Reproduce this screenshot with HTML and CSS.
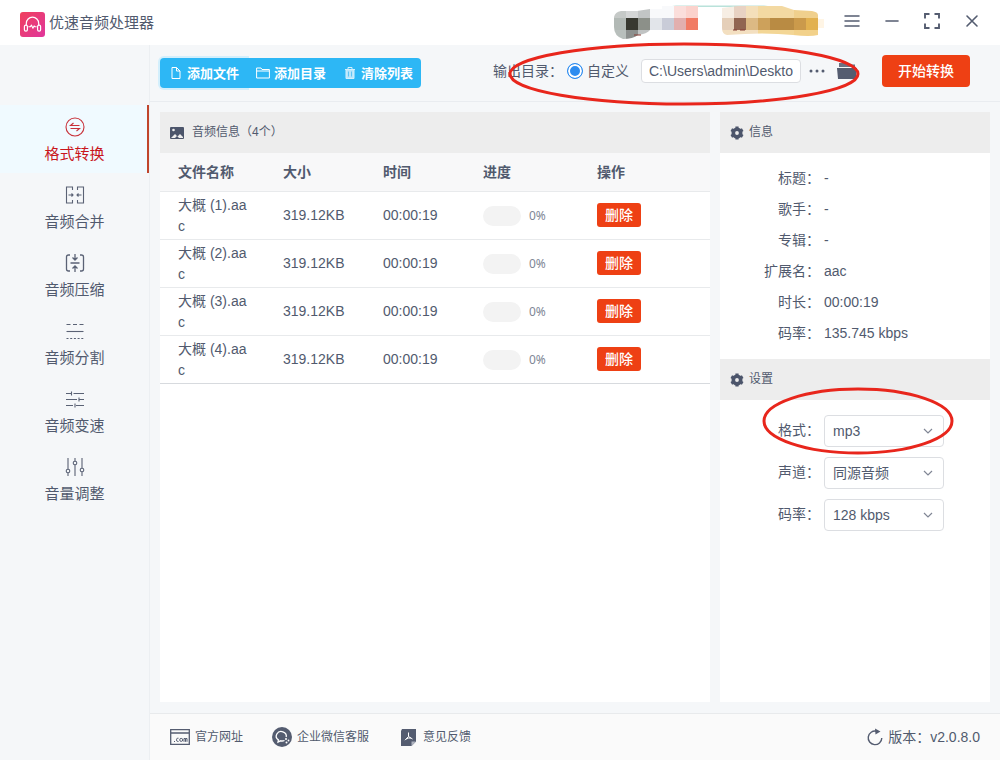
FILE: index.html
```
<!doctype html>
<html lang="zh-CN">
<head>
    <meta charset="utf-8">
    <title>优速音频处理器</title>
    <link rel="stylesheet" href="styles.css">
</head>
<body>
    <header class="titlebar">
        <svg class="logo" width="25" height="25" viewBox="0 0 25 25">
            <defs>
                <linearGradient id="logo-bg" x1="0" y1="0" x2="1" y2="1">
                    <stop offset="0" stop-color="#f0405c"/>
                    <stop offset="1" stop-color="#e0369c"/>
                </linearGradient>
            </defs>
            <rect width="25" height="25" rx="3" fill="url(#logo-bg)"/>
            <g fill="none" stroke="#fff" stroke-width="1.2" stroke-linecap="round" stroke-linejoin="round">
                <path d="M6.300 13v-1.600a6.200 6.200 0 0 1 12.400 0V13"/>
                <rect x="4.400" y="13.200" width="3" height="6" rx="1.400"/>
                <rect x="17.600" y="13.200" width="3" height="6" rx="1.400"/>
                <path d="M8.800 14.700h1.600l1-1.600 1.500 3.200 1.200-2.400.7.800h1.400" stroke-width="1.100"/>
            </g>
        </svg>
        <h1 class="title">优速音频处理器</h1>
        <svg class="account" width="212" height="37" viewBox="612 4 212 37">
            <path d="M676 5.500h88l12 1.500H664z" fill="#b9e2da"/>
            <clipPath id="acc-a"><path d="M614 17q1-5 7-6h16l13-2h12V6h36v24q-30 1-48 0-3 4-12 5-5 4-15 4-9-3-9-12z"/></clipPath>
            <g clip-path="url(#acc-a)">
                <path fill="#c5c9c7" d="M614 6h12v12h-12z"/>
                <path fill="#d4d6d6" d="M626 6h12v12h-12z"/>
                <path fill="#c2c5c5" d="M638 6h12v12h-12z"/>
                <path fill="#f8f9fb" d="M650 6h24v12h-24z"/>
                <path fill="#fbdedb" d="M674 6h12v12h-12z"/>
                <path fill="#fbd2cc" d="M686 6h12v12h-12z"/>
                <path fill="#b2b9b5" d="M614 18h12v12h-12z"/>
                <path fill="#37382f" d="M626 18h12v12h-12z"/>
                <path fill="#8c9089" d="M638 18h12v12h-12z"/>
                <path fill="#e2e5ea" d="M650 18h12v12h-12z"/>
                <path fill="#c9ccd8" d="M662 18h12v12h-12z"/>
                <path fill="#e2afae" d="M674 18h12v12h-12z"/>
                <path fill="#f17b64" d="M686 18h12v12h-12z"/>
                <path fill="#b8bfbc" d="M614 30h12v10h-12z"/>
                <path fill="#8c908e" d="M626 30h12v10h-12z"/>
                <path fill="#c0c3c3" d="M638 30h12v10h-12z"/>
            </g>
            <clipPath id="acc-b"><path d="M722 8l16-2h44l12 4 18 1q6 1 6 4v20q-8 2-25 0-30-3-66 0-5-1-5-7z"/></clipPath>
            <g clip-path="url(#acc-b)">
                <path fill="#f7eee4" d="M722 6h12v12h-12z"/>
                <path fill="#e8d2c3" d="M734 6h12v12h-12z"/>
                <path fill="#f4dfba" d="M746 6h12v12h-12z"/>
                <path fill="#f3d9a2" d="M758 6h36v12h-36z"/>
                <path fill="#f0d08d" d="M794 6h24v12h-24z"/>
                <path fill="#e5cfb9" d="M722 18h12v12h-12z"/>
                <path fill="#916551" d="M734 18h12v12h-12z"/>
                <path fill="#dcb984" d="M746 18h12v12h-12z"/>
                <path fill="#cda15b" d="M758 18h12v12h-12z"/>
                <path fill="#b98b43" d="M770 18h24v12h-24z"/>
                <path fill="#cb9a4b" d="M794 18h12v12h-12z"/>
                <path fill="#e2b150" d="M806 18h12v12h-12z"/>
                <path fill="#f3dfc0" d="M722 30h36v10h-36z"/>
                <path fill="#f3d695" d="M758 30h36v10h-36z"/>
                <path fill="#f2d18a" d="M794 30h24v10h-24z"/>
            </g>
            <path fill="#fff5e5" d="M818 19h6v9h-6z"/>
            <path d="M634 35h7M733 30h4m3 0h5" stroke="#873d35" stroke-width="1"/>
        </svg>
        <button class="win-btn" type="button" aria-label="菜单">
            <svg width="20" height="20" viewBox="0 0 20 20"><path d="M3 5h14M3 10h14M3 15h14" stroke="#545c70" stroke-width="1.500" stroke-linecap="round"/></svg>
        </button>
        <button class="win-btn" type="button" aria-label="最小化">
            <svg width="20" height="20" viewBox="0 0 20 20"><path d="M4 10h12" stroke="#545c70" stroke-width="1.600" stroke-linecap="round"/></svg>
        </button>
        <button class="win-btn" type="button" aria-label="最大化">
            <svg width="20" height="20" viewBox="0 0 20 20"><path d="M3 7.500V3h4.500M12.500 3H17v4.500M17 12.500V17h-4.500M7.500 17H3v-4.500" fill="none" stroke="#545c70" stroke-width="1.900"/></svg>
        </button>
        <button class="win-btn" type="button" aria-label="关闭">
            <svg width="20" height="20" viewBox="0 0 20 20"><path d="M5 5l10 10M15 5L5 15" stroke="#545c70" stroke-width="1.600" stroke-linecap="round"/></svg>
        </button>
    </header>

    <div class="app">
        <nav class="sidebar">
            <a class="nav-item active" href="#convert">
                <svg width="20" height="20" viewBox="0 0 20 20"><circle cx="10" cy="10" r="9"/><path d="M14.500 8.500h-9l3-2.500M5.500 11.500h9l-3 2.500"/></svg>
                格式转换
            </a>
            <a class="nav-item" href="#merge">
                <svg width="20" height="20" viewBox="0 0 20 20"><path d="M1.500 7V2h6v3M7.500 15v3h-6v-5M1.500 7v6M12.500 5V2h6v16h-6v-3M3.500 10h4.500M6.500 8.500L8 10l-1.500 1.500M16.500 10H12M13.500 8.500L12 10l1.500 1.500"/></svg>
                音频合并
            </a>
            <a class="nav-item" href="#compress">
                <svg width="20" height="20" viewBox="0 0 20 20"><g stroke-width="1.300"><path d="M5 2H3.500Q1.500 2 1.500 4v12q0 2 2 2H5M15 2h1.500q2 0 2 2v12q0 2-2 2H15M5.500 10h9M10 1v6M7.500 4.500L10 7l2.500-2.500M10 19v-6M7.500 15.500L10 13l2.500 2.500"/></g></svg>
                音频压缩
            </a>
            <a class="nav-item" href="#split">
                <svg width="20" height="20" viewBox="0 0 20 20"><path d="M1.500 10.500h17"/><path d="M1.500 3.500h17" stroke-dasharray="4 2.500"/><path d="M1.500 17.500h17" stroke-dasharray="2 1.700"/></svg>
                音频分割
            </a>
            <a class="nav-item" href="#speed">
                <svg width="20" height="20" viewBox="0 0 20 20"><path d="M1 4.500h5.500M8.500 4.500h10.500M6.500 2.500v4M1 10.500h11M14 10.500h5M14 8.500v4M1 16.500h7M11 16.500h8M10 14.500v4"/></svg>
                音频变速
            </a>
            <a class="nav-item" href="#volume">
                <svg width="20" height="20" viewBox="0 0 20 20"><path d="M3 1v11M3 16v3M10 1v3M10 8v11M17 1v10M17 15v4"/><circle cx="3" cy="14" r="1.800"/><circle cx="10" cy="6" r="1.800"/><circle cx="17" cy="13" r="1.800"/></svg>
                音量调整
            </a>
        </nav>

        <main class="main">
            <div class="toolbar">
                <div class="btn-group">
                    <button class="btn-blue focused" type="button">
                        <svg width="14" height="14" viewBox="0 0 14 14"><path d="M3 1.500h4.500L11 5v7.500H3zM7.500 1.500V5H11"/></svg>
                        添加文件
                    </button>
                    <button class="btn-blue" type="button">
                        <svg width="14" height="14" viewBox="0 0 14 14"><path d="M.6 2h4.400l1 1.500h7.400v8.500H.6zM.6 5h12.800"/></svg>
                        添加目录
                    </button>
                    <button class="btn-blue" type="button">
                        <svg width="14" height="14" viewBox="0 0 14 14"><path d="M3 4h8v8.500H3z" fill="#b9e5fb" stroke="none"/><path d="M2 3.500h10M5 3V1.500h4V3M3 4v8.500h8V4" stroke="#d5f0fd"/><path d="M5.500 5.500v5M8.500 5.500v5" stroke="#5fc4f5"/></svg>
                        清除列表
                    </button>
                </div>
                <div class="output">
                    <span>输出目录：</span>
                    <label class="radio"><input type="radio" name="dir" checked>自定义</label>
                    <input class="path" type="text" value="C:\Users\admin\Deskto" aria-label="输出目录">
                    <button class="icon-btn" type="button" aria-label="浏览">
                        <svg width="16" height="16" viewBox="0 0 16 16" fill="#545c70"><circle cx="2" cy="8" r="1.500"/><circle cx="8" cy="8" r="1.500"/><circle cx="14" cy="8" r="1.500"/></svg>
                    </button>
                    <button class="icon-btn folder" type="button" aria-label="打开目录">
                        <svg width="20" height="18" viewBox="0 0 20 18" fill="#545c70"><path d="M2 1h6l1.500 1.500H18V5H2z" opacity=".85"/><path d="M0 6h20l-1 11H1z"/></svg>
                    </button>
                    <svg class="mark mark-output" width="352" height="64" viewBox="0 0 352 64"><ellipse cx="176" cy="32" rx="174" ry="30"/></svg>
                </div>
                <button class="btn-start" type="button">开始转换</button>
            </div>

            <div class="content">
                <section class="panel files">
                    <h2 class="panel-head">
                        <svg width="14" height="14" viewBox="0 0 14 14"><rect y="1" width="14" height="12" rx="1" fill="#4c556b"/><circle cx="3.500" cy="4" r="1.300" fill="#eee"/><path d="M1 12l4-4 2.500 2.500L10 8l3 3v1z" fill="#eee"/><path d="M4 13l3-3 3 3z" fill="#4c556b"/></svg>
                        <span class="files-title">音频信息（4个）</span>
                    </h2>
                    <table>
                        <colgroup><col class="c-name"><col class="c-size"><col class="c-time"><col class="c-progress"><col></colgroup>
                        <thead>
                            <tr><th>文件名称</th><th>大小</th><th>时间</th><th>进度</th><th>操作</th></tr>
                        </thead>
                        <tbody>
                            <tr>
                                <td>大概 (1).aac</td><td>319.12KB</td><td>00:00:19</td>
                                <td><div class="progress"><span class="bar"></span>0%</div></td>
                                <td><button class="btn-del" type="button">删除</button></td>
                            </tr>
                            <tr>
                                <td>大概 (2).aac</td><td>319.12KB</td><td>00:00:19</td>
                                <td><div class="progress"><span class="bar"></span>0%</div></td>
                                <td><button class="btn-del" type="button">删除</button></td>
                            </tr>
                            <tr>
                                <td>大概 (3).aac</td><td>319.12KB</td><td>00:00:19</td>
                                <td><div class="progress"><span class="bar"></span>0%</div></td>
                                <td><button class="btn-del" type="button">删除</button></td>
                            </tr>
                            <tr>
                                <td>大概 (4).aac</td><td>319.12KB</td><td>00:00:19</td>
                                <td><div class="progress"><span class="bar"></span>0%</div></td>
                                <td><button class="btn-del" type="button">删除</button></td>
                            </tr>
                        </tbody>
                    </table>
                </section>

                <aside class="panel side">
                    <h2 class="panel-head">
                        <svg width="14" height="14" viewBox="0 0 14 14"><circle cx="7" cy="7" r="3.700" fill="none" stroke="#4c556b" stroke-width="3.600"/><path d="M5.500.5h3v13h-3zM.5 5.500h13v3H.5z" fill="none" stroke="none"/><path d="M7 .4v2.600M7 11v2.600M1.300 3.700l2.300 1.300M10.400 9l2.300 1.300M1.300 10.300L3.600 9M10.400 5l2.300-1.300" stroke="#4c556b" stroke-width="3.200"/></svg>
                        信息
                    </h2>
                    <dl class="info">
                        <dt>标题：</dt><dd>-</dd>
                        <dt>歌手：</dt><dd>-</dd>
                        <dt>专辑：</dt><dd>-</dd>
                        <dt>扩展名：</dt><dd>aac</dd>
                        <dt>时长：</dt><dd>00:00:19</dd>
                        <dt>码率：</dt><dd>135.745 kbps</dd>
                    </dl>
                    <h2 class="panel-head">
                        <svg width="14" height="14" viewBox="0 0 14 14"><circle cx="7" cy="7" r="3.700" fill="none" stroke="#4c556b" stroke-width="3.600"/><path d="M7 .4v2.600M7 11v2.600M1.300 3.700l2.300 1.300M10.400 9l2.300 1.300M1.300 10.300L3.600 9M10.400 5l2.300-1.300" stroke="#4c556b" stroke-width="3.200"/></svg>
                        设置
                    </h2>
                    <form class="settings">
                        <label for="format">格式：</label>
                        <div class="select">
                            <select id="format"><option>mp3</option></select>
                            <svg width="10" height="10" viewBox="0 0 10 10"><path d="M1 3l4 4 4-4"/></svg>
                        </div>
                        <label for="channel">声道：</label>
                        <div class="select">
                            <select id="channel"><option>同源音频</option></select>
                            <svg width="10" height="10" viewBox="0 0 10 10"><path d="M1 3l4 4 4-4"/></svg>
                        </div>
                        <label for="bitrate">码率：</label>
                        <div class="select">
                            <select id="bitrate"><option>128 kbps</option></select>
                            <svg width="10" height="10" viewBox="0 0 10 10"><path d="M1 3l4 4 4-4"/></svg>
                        </div>
                        <svg class="mark mark-format" width="192" height="68" viewBox="0 0 192 68"><ellipse cx="96" cy="34" rx="94" ry="32"/></svg>
                    </form>
                </aside>
            </div>

            <footer class="footer">
                <a class="foot-link" href="#site">
                    <svg width="20" height="16" viewBox="0 0 20 16"><path d="M.7.700h18.600v14.600H.7zM.7 4h18.600" fill="none" stroke="#545c70" stroke-width="1.300"/><g fill="none" stroke="#545c70" stroke-width="1"><path d="M4 12.500h1M8.500 9.200H7.800q-1.300 0-1.300 1.600t1.300 1.700h.7M14 12.800V9.500h1.500v3.300M15.500 9.500H17v3.300"/><circle cx="11.200" cy="10.900" r="1.500"/></g></svg>
                    官方网址
                </a>
                <a class="foot-link" href="#service">
                    <svg width="20" height="20" viewBox="0 0 20 20"><circle cx="10" cy="10" r="10" fill="#545c70"/><path d="M12.500 13.500q-2 .8-4 .3L6 15l.4-2.100A5 4.600 0 1 1 14.200 10" fill="none" stroke="#fff" stroke-width="1.300"/><circle cx="14" cy="12" r="1" fill="#fff"/><circle cx="16.500" cy="13.500" r=".9" fill="#fff"/><circle cx="14.500" cy="15.500" r="1" fill="#fff"/></svg>
                    企业微信客服
                </a>
                <a class="foot-link" href="#feedback">
                    <svg width="20" height="18" viewBox="-3 0 20 18"><path d="M1 1h14v12.500L10.500 18H0V3z" fill="#545c70"/><path d="M10.500 18v-4.500H15z" fill="#aeb3bf"/><path d="M7.500 4.500v4L4 12.200M7.500 8.500l4 2.500M5 11q2.500-1.500 5-1" fill="none" stroke="#fff" stroke-width="1"/></svg>
                    意见反馈
                </a>
                <span class="version">
                    <svg width="16" height="18" viewBox="0 0 16 18"><path d="M9.500 3.200A6.800 6.800 0 1 0 14.800 10" fill="none" stroke="#545c70" stroke-width="1.400"/><path d="M8 .5l5.500 3L8.500 6.500z" fill="#545c70"/></svg>
                    版本：v2.0.8.0
                </span>
            </footer>
        </main>
    </div>
</body>
</html>
```
FILE: styles.css
```
* {
    box-sizing: border-box;
}
body {
    margin: 0;
    min-height: 100vh;
    display: flex;
    flex-direction: column;
    background: #f5f7f9;
    color: #515a6e;
    font: 14px/21px "Liberation Sans", "Noto Sans CJK SC", sans-serif;
}
button, input, select {
    font: inherit;
    color: inherit;
}
button {
    border: 0;
    padding: 0;
    background: none;
    cursor: pointer;
}
a {
    color: inherit;
    text-decoration: none;
}
svg {
    display: block;
    flex: none;
}
h1, h2 {
    margin: 0;
    font-weight: normal;
}

/* title bar */
.titlebar {
    display: flex;
    align-items: center;
    height: 45px;
    padding: 0 8px 0 20px;
    background: #fff;
}
.logo {
    margin-top: 4px;
}
.title {
    margin-left: 4px;
    font-size: 15px;
}
.account {
    margin-left: auto;
    margin-right: 8px;
}
.win-btn {
    display: flex;
    justify-content: center;
    width: 40px;
    padding-bottom: 3px;
}

.app {
    flex: 1;
    display: flex;
}

/* left menu */
.sidebar {
    width: 150px;
    flex: none;
    padding-top: 60px;
    border-right: 1px solid #eceff2;
    background: #f5f7f9;
}
.nav-item {
    display: flex;
    flex-direction: column;
    align-items: center;
    gap: 6px;
    height: 68px;
    padding-top: 12px;
    font-size: 15px;
}
.nav-item svg {
    fill: none;
    stroke: #5a6275;
    stroke-width: 1.1;
}
.nav-item.active {
    background: #f0faff;
    box-shadow: inset -2px 0 #c0452c;
    color: #c9161d;
}
.nav-item.active svg {
    stroke: #c8323a;
}

/* toolbar */
.main {
    flex: 1;
    min-width: 0;
    display: flex;
    flex-direction: column;
}
.toolbar {
    display: flex;
    align-items: center;
    height: 57px;
    padding: 0 30px 0 10px;
    border-bottom: 1px solid #e9ecf0;
}
.btn-group {
    display: flex;
}
.btn-blue {
    position: relative;
    display: flex;
    align-items: center;
    gap: 4px;
    height: 30px;
    padding: 0 8px 0 9px;
    background: #2db7f5;
    color: #fff;
    font-size: 13px;
    font-weight: bold;
    white-space: nowrap;
}
.btn-blue svg {
    fill: none;
    stroke: #fff;
}
.btn-blue:last-child {
    border-radius: 0 4px 4px 0;
}
.btn-blue.focused {
    border-radius: 4px 0 0 4px;
    box-shadow: 0 0 0 2px #d3effc;
}
.output {
    position: relative;
    display: flex;
    align-items: center;
    margin-left: auto;
    margin-bottom: 4px;
    white-space: nowrap;
}
.radio {
    display: flex;
    align-items: center;
    gap: 4px;
    margin: 0 12px 0 4px;
}
.radio input {
    appearance: none;
    width: 16px;
    height: 16px;
    margin: 0;
    border: 1px solid #2d8cf0;
    border-radius: 50%;
    background: #2d8cf0;
    box-shadow: inset 0 0 0 2px #fff;
}
.path {
    width: 160px;
    height: 24px;
    padding: 0 7px;
    border: 1px solid #dcdee2;
    border-radius: 4px;
    background: #fff;
}
.icon-btn {
    margin-left: 8px;
}
.icon-btn.folder {
    margin-left: 12px;
}
.btn-start {
    width: 88px;
    height: 32px;
    margin: 0 0 4px 25px;
    border-radius: 4px;
    background: #ee4014;
    color: #fff;
    font-weight: 500;
}

/* red rings around the fields to fill in */
.mark {
    position: absolute;
    fill: none;
    stroke: #e8261c;
    stroke-width: 3;
    pointer-events: none;
}
.mark-output {
    top: -17px;
    right: -3px;
}
.mark-format {
    top: -13px;
    left: 42px;
}

/* panels */
.content {
    flex: 1;
    display: flex;
    gap: 10px;
    padding: 10px 10px 11px;
}
.panel {
    background: #fff;
}
.files {
    flex: 1;
}
.side {
    width: 270px;
}
.panel-head {
    display: flex;
    align-items: center;
    gap: 5px;
    height: 41px;
    padding: 0 10px;
    background: #ededed;
    font-size: 12px;
}
.files-title {
    margin-left: 3px;
}
table {
    width: 100%;
    table-layout: fixed;
    border-collapse: separate;
    border-spacing: 0;
}
.c-name {
    width: 105px;
}
.c-size, .c-time {
    width: 100px;
}
.c-progress {
    width: 114px;
}
th, td {
    padding: 0 15px 0 18px;
    border-bottom: 1px solid #e8eaec;
    text-align: left;
}
th {
    height: 39px;
    background: #f8f8f9;
}
td {
    height: 48px;
    word-break: break-all;
}
tbody tr:last-child td {
    border-bottom-color: #d7dade;
}
.progress {
    display: flex;
    align-items: center;
    gap: 8px;
    font: 12px/20px "Noto Sans", sans-serif;
    color: #808695;
}
.bar {
    width: 38px;
    height: 20px;
    border-radius: 10px;
    background: #f3f3f3;
}
.btn-del {
    display: block;
    width: 44px;
    height: 24px;
    margin-top: -1px;
    border-radius: 3px;
    background: #ee4014;
    color: #fff;
    font-weight: 500;
}

.info {
    display: grid;
    grid-template-columns: 100px 1fr;
    column-gap: 4px;
    margin: 0;
    padding: 10px 0;
    line-height: 31px;
}
.info dt {
    text-align: right;
}
.info dd {
    margin: 0;
}
.settings {
    position: relative;
    display: grid;
    grid-template-columns: 100px 120px;
    gap: 10px 4px;
    padding-top: 15px;
    line-height: 31px;
}
.settings label {
    text-align: right;
}
.select {
    position: relative;
}
.select select {
    appearance: none;
    display: block;
    width: 100%;
    height: 32px;
    padding: 0 24px 0 8px;
    border: 1px solid #dcdee2;
    border-radius: 4px;
    background: #fff;
}
.select svg {
    position: absolute;
    top: 11px;
    right: 11px;
    fill: none;
    stroke: #808695;
    stroke-width: 1.2;
    pointer-events: none;
}

/* footer */
.footer {
    display: flex;
    align-items: center;
    gap: 29px;
    height: 47px;
    padding: 0 20px;
    border-top: 1px solid #e8eaec;
    background: #fafafa;
}
.foot-link, .version {
    display: flex;
    align-items: center;
    gap: 5px;
    font-size: 12px;
}
.version {
    margin-left: auto;
    font-size: 14px;
}
```
